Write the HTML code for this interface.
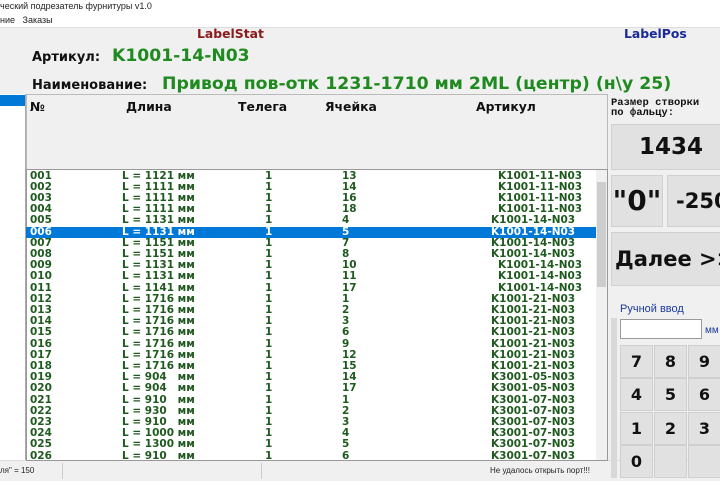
<!DOCTYPE html>
<html><head><meta charset="utf-8"><style>
*{margin:0;padding:0;box-sizing:border-box}
body{width:720px;height:480px;overflow:hidden;background:#f0f0f0;font-family:"DejaVu Sans","Liberation Sans",sans-serif;position:relative}
.a{position:absolute;white-space:nowrap}
.b{font-weight:bold}
.row{position:absolute;left:26px;width:570px;height:11.2px;font:bold 10.5px/11.2px "DejaVu Sans",sans-serif;color:#1e5a1e}
.row span{position:absolute;top:0}
.sel{background:#0078d7;color:#fff}
.btn{position:absolute;background:#e1e1e1;border:1px solid #d0d0d0;font-weight:bold;color:#111;text-align:center;white-space:nowrap;overflow:hidden}
.k{position:absolute;width:33px;height:33px;background:#e1e1e1;border:1px solid #cfcfcf;font:bold 16px/32px "DejaVu Sans",sans-serif;text-align:center;color:#111}
.h{font-size:12.4px;top:99px;color:#111;font-weight:bold}
</style></head><body>
<div class="a" style="left:0;top:0;width:720px;height:13px;background:#fff;font:9px/13px 'Liberation Sans',sans-serif;color:#222">ческий подрезатель фурнитуры v1.0</div>
<div class="a" style="left:0;top:13px;width:720px;height:15px;background:#fff;font:9px/15px 'Liberation Sans',sans-serif;color:#222">ние&nbsp;&nbsp;&nbsp;Заказы</div>
<div class="a" style="left:0;top:27px;width:720px;height:1px;background:#ddd"></div>
<div class="a" style="left:0;top:94px;width:26px;height:366px;background:#fff;border-right:1px solid #aaa"></div>
<div class="a" style="left:0;top:95px;width:25px;height:11px;background:#0078d7"></div>
<div class="a b" style="left:197px;top:26px;font-size:12.4px;color:#8b1a1a">LabelStat</div>
<div class="a b" style="left:624px;top:26px;font-size:12.4px;color:#1a2a9a">LabelPos</div>
<div class="a b" style="left:32px;top:50px;font-size:13px;color:#111">Артикул:</div>
<div class="a b" style="left:112px;top:46px;font-size:17.2px;color:#1f8a1f">K1001-14-N03</div>
<div class="a b" style="left:32px;top:78px;font-size:13px;color:#111">Наименование:</div>
<div class="a b" style="left:162px;top:74px;font-size:17.3px;color:#1f8a1f">Привод пов-отк 1231-1710 мм 2ML (центр) (н\у 25)</div>
<div class="a" style="left:26px;top:94px;width:582px;height:76px;border:1px solid #bbb;border-bottom:none"></div>
<div class="a h" style="left:30px">№</div>
<div class="a h" style="left:126px">Длина</div>
<div class="a h" style="left:238px">Телега</div>
<div class="a h" style="left:325px">Ячейка</div>
<div class="a h" style="left:476px">Артикул</div>
<div class="a" style="left:26px;top:169px;width:582px;height:292px;background:#fff;border:1px solid #999;overflow:hidden"></div>
<div class="a" style="left:596px;top:170px;width:11px;height:290px;background:#f0f0f0"></div>
<div class="a" style="left:597px;top:182px;width:9px;height:105px;background:#cdcdcd"></div>
<div id="rows"></div>
<div class="a" style="left:0;top:460px;width:720px;height:20px;background:#f0f0f0;border-top:1px solid #ddd;font:8px/20px 'Liberation Sans',sans-serif;color:#222">
<span class="a" style="left:0">ля" = 150</span><span class="a" style="left:490px">Не удалось открыть порт!!!</span>
<span class="a" style="left:62px;top:2px;width:1px;height:16px;background:#ccc"></span><span class="a" style="left:261px;top:2px;width:1px;height:16px;background:#ccc"></span></div>
<div class="a" style="left:611px;top:98px;font:bold 10.5px/10px 'Liberation Mono',monospace;color:#111">Размер створки<br>по фальцу:</div>
<div class="btn" style="left:611px;top:124px;width:112px;height:46px;font-size:23px;line-height:44px;padding-left:8px">1434</div>
<div class="btn" style="left:611px;top:175px;width:52px;height:52px;font-size:28px;line-height:50px">"0"</div>
<div class="btn" style="left:667px;top:175px;width:60px;height:52px;font-size:21px;line-height:50px;text-align:left;padding-left:8px">-250</div>
<div class="btn" style="left:611px;top:232px;width:115px;height:54px;font-size:21px;line-height:52px;text-align:left;padding-left:3px">Далее &gt;&gt;</div>
<div class="a" style="left:620px;top:303px;font:11px 'Liberation Sans',sans-serif;color:#1a3a9a">Ручной ввод</div>
<div class="a" style="left:620px;top:319px;width:82px;height:20px;background:#fff;border:1px solid #999"></div>
<div class="a" style="left:705px;top:325px;font:10px 'Liberation Sans',sans-serif;color:#1a3a9a">мм</div>
<div class="a" style="left:611px;top:318px;width:6px;height:160px;background:#d8d8d8"></div>
<div class="k" style="left:620px;top:345px">7</div><div class="k" style="left:654px;top:345px">8</div><div class="k" style="left:688px;top:345px">9</div>
<div class="k" style="left:620px;top:378px">4</div><div class="k" style="left:654px;top:378px">5</div><div class="k" style="left:688px;top:378px">6</div>
<div class="k" style="left:620px;top:412px">1</div><div class="k" style="left:654px;top:412px">2</div><div class="k" style="left:688px;top:412px">3</div>
<div class="k" style="left:620px;top:445px">0</div><div class="k" style="left:654px;top:445px"></div><div class="k" style="left:688px;top:445px"></div>
<script>
var d=[["001","L = 1121 мм","13","K1001-11-N03"],["002","L = 1111 мм","14","K1001-11-N03"],["003","L = 1111 мм","16","K1001-11-N03"],["004","L = 1111 мм","18","K1001-11-N03"],["005","L = 1131 мм","4","K1001-14-N03"],["006","L = 1131 мм","5","K1001-14-N03"],["007","L = 1151 мм","7","K1001-14-N03"],["008","L = 1151 мм","8","K1001-14-N03"],["009","L = 1131 мм","10","K1001-14-N03"],["010","L = 1131 мм","11","K1001-14-N03"],["011","L = 1141 мм","17","K1001-14-N03"],["012","L = 1716 мм","1","K1001-21-N03"],["013","L = 1716 мм","2","K1001-21-N03"],["014","L = 1716 мм","3","K1001-21-N03"],["015","L = 1716 мм","6","K1001-21-N03"],["016","L = 1716 мм","9","K1001-21-N03"],["017","L = 1716 мм","12","K1001-21-N03"],["018","L = 1716 мм","15","K1001-21-N03"],["019","L = 904&nbsp;&nbsp; мм","14","K3001-05-N03"],["020","L = 904&nbsp;&nbsp; мм","17","K3001-05-N03"],["021","L = 910&nbsp;&nbsp; мм","1","K3001-07-N03"],["022","L = 930&nbsp;&nbsp; мм","2","K3001-07-N03"],["023","L = 910&nbsp;&nbsp; мм","3","K3001-07-N03"],["024","L = 1000 мм","4","K3001-07-N03"],["025","L = 1300 мм","5","K3001-07-N03"],["026","L = 910&nbsp;&nbsp; мм","6","K3001-07-N03"]];
var h="";for(var i=0;i<d.length;i++){var t=170.5+i*11.2;var ax=(i<4||(i>=8&&i<11))?472:465;
h+='<div class="row'+(i==5?' sel':'')+'" style="top:'+t+'px"><span style="left:4px">'+d[i][0]+'</span><span style="left:96px">'+d[i][1]+'</span><span style="left:239px">1</span><span style="left:316px">'+d[i][2]+'</span><span style="left:'+ax+'px">'+d[i][3]+'</span></div>';}
document.getElementById("rows").innerHTML=h;
</script>
<div class="a" style="left:26px;top:460px;width:582px;height:1px;background:#999"></div>
</body></html>
